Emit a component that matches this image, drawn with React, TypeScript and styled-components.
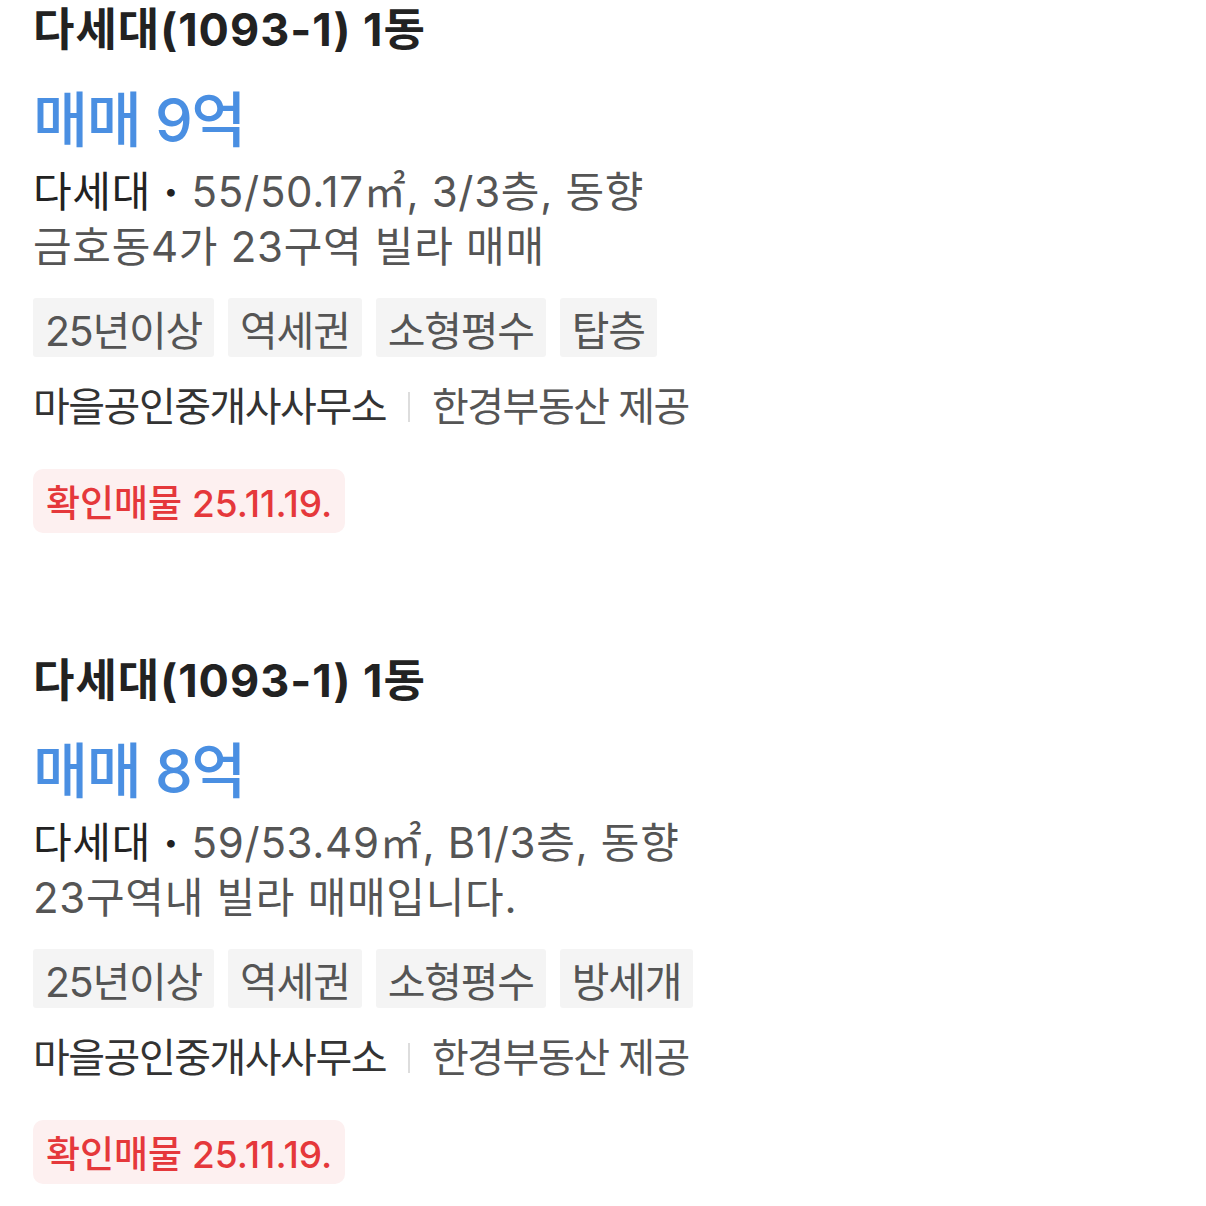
import React from "react";
import styled, { createGlobalStyle } from "styled-components";

const Global = createGlobalStyle`
  html, body { margin: 0; padding: 0; background: #fff; }
  body { font-family: Inter, "Noto Sans CJK KR", "Noto Sans", sans-serif; }
`;

const Page = styled.div`
  display: flex;
  flex-direction: column;
  gap: 118px;
  padding: 0 0 0 33px;
`;

const Card = styled.section`
  display: flex;
  flex-direction: column;
  align-items: flex-start;
`;

const Title = styled.h2`
  margin: 0;
  font-size: 45px;
  line-height: 60px;
  font-weight: 700;
  color: #222;
  letter-spacing: 1px;
`;

const Price = styled.div`
  margin-top: 28px;
  font-size: 60px;
  line-height: 64px;
  font-weight: 500;
  color: #4a8fe2;
  letter-spacing: -1.5px;
`;

const Desc = styled.div`
  margin-top: 12px;
  font-size: 42px;
  line-height: 55px;
  font-weight: 400;
  color: #555;
  letter-spacing: 0.7px;
`;

const Strong = styled.span`
  color: #222;
`;

const Dot = styled.span`
  font-weight: 800;
  color: #222;
`;

const Tags = styled.div`
  display: flex;
  gap: 14px;
  margin-top: 24px;
`;

const Tag = styled.span`
  display: inline-flex;
  align-items: center;
  height: 59px;
  padding: 0 12px;
  background: #f4f4f4;
  border-radius: 3px;
  font-size: 41px;
  color: #555;
  letter-spacing: -1.2px;
`;

const Agency = styled.div`
  display: flex;
  align-items: center;
  margin-top: 22px;
  font-size: 40px;
  line-height: 56px;
  color: #555;
  letter-spacing: -1.5px;
`;

const AgencyName = styled.span`
  color: #333;
`;

const Sep = styled.span`
  display: inline-block;
  width: 2px;
  height: 30px;
  background: #ddd;
  margin: 0 22px;
`;

const Badge = styled.div`
  display: inline-flex;
  align-items: center;
  height: 64px;
  margin-top: 34px;
  padding: 0 13px;
  background: #fdf0f0;
  border-radius: 10px;
  font-size: 37px;
  font-weight: 500;
  color: #e5383b;
  letter-spacing: 0px;
`;

type Listing = {
  price: string;
  area: string;
  floor: string;
  note: string;
  tags: string[];
};

const listings: Listing[] = [
  { price: "매매 9억", area: "55/50.17㎡", floor: "3/3층", note: "금호동4가 23구역 빌라 매매", tags: ["25년이상", "역세권", "소형평수", "탑층"] },
  { price: "매매 8억", area: "59/53.49㎡", floor: "B1/3층", note: "23구역내 빌라 매매입니다.", tags: ["25년이상", "역세권", "소형평수", "방세개"] },
];

export default function App() {
  return (
    <>
      <Global />
      <Page>
        {listings.map((l, i) => (
          <Card key={i}>
            <Title>다세대(1093-1) 1동</Title>
            <Price>{l.price}</Price>
            <Desc>
              <Strong>다세대</Strong> <Dot>·</Dot> {l.area}, {l.floor}, 동향
              <br />
              {l.note}
            </Desc>
            <Tags>
              {l.tags.map((t) => (
                <Tag key={t}>{t}</Tag>
              ))}
            </Tags>
            <Agency>
              <AgencyName>마을공인중개사사무소</AgencyName>
              <Sep />
              한경부동산 제공
            </Agency>
            <Badge>확인매물 25.11.19.</Badge>
          </Card>
        ))}
      </Page>
    </>
  );
}
